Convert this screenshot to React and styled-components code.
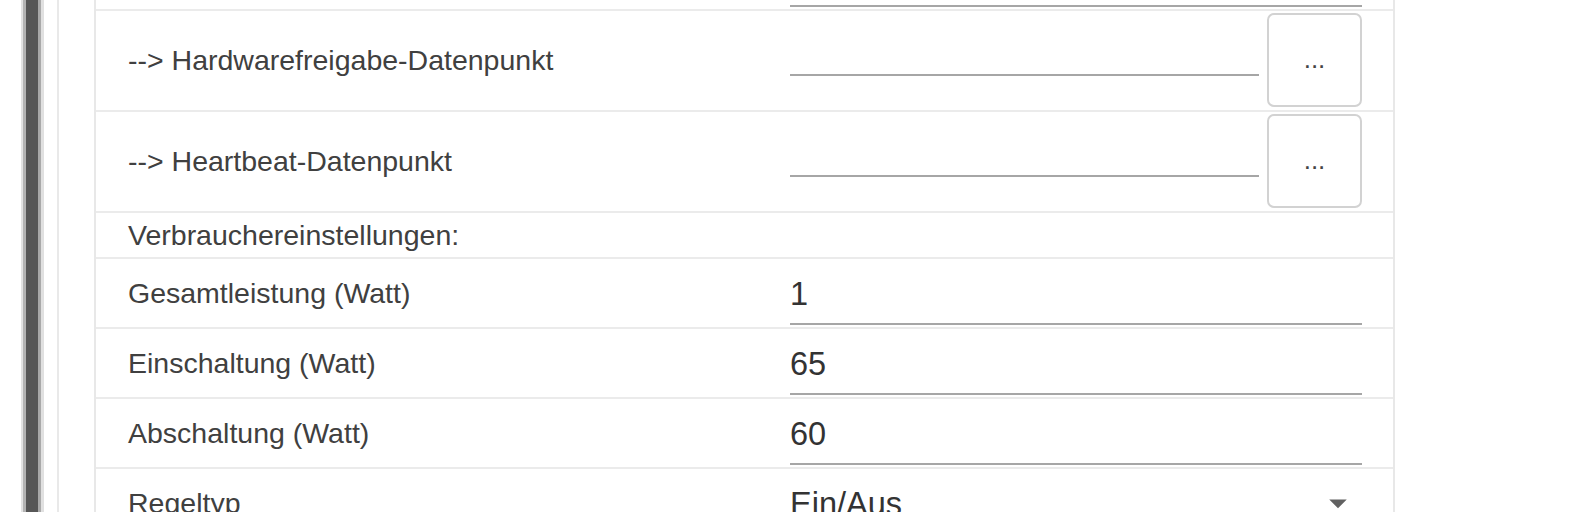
import React from "react";
import styled, { createGlobalStyle } from "styled-components";

const GlobalStyle = createGlobalStyle`
  html, body { margin: 0; padding: 0; background: #ffffff; }
  body { font-family: "Liberation Sans", Arial, sans-serif; overflow: hidden; }
`;

const Page = styled.div`
  display: flex;
  align-items: stretch;
  height: 512px;
  overflow: hidden;
  background: #fff;
`;

const Rail = styled.div`
  flex: none;
  width: 23px;
  margin-left: 21px;
  background: linear-gradient(
    to right,
    #e3e3e3 0, #e3e3e3 2px,
    #b3b3b3 2px, #b3b3b3 5px,
    #575757 5px, #575757 17px,
    #a9a9a9 17px, #a9a9a9 20px,
    #e0e0e0 20px, #e0e0e0 23px
  );
`;

const Divider = styled.div`
  flex: none;
  width: 2px;
  margin-left: 13px;
  background: #e9e9e9;
`;

const Main = styled.div`
  flex: 1;
  padding-left: 35px;
  display: flex;
  align-items: flex-start;
`;

const Table = styled.div`
  width: 1301px;
  flex: none;
  margin-top: -59px;
  border-left: 2px solid #e8e8e8;
  border-right: 2px solid #e8e8e8;
  box-sizing: border-box;
`;

const Row = styled.div`
  display: grid;
  grid-template-columns: 694px 1fr;
  height: ${(p) => p.$h}px;
  box-sizing: border-box;
  border-bottom: 2px solid #ebebeb;
`;

const Label = styled.div`
  display: flex;
  align-items: center;
  padding-left: 32px;
  font-size: 28.5px;
  color: #404040;
  white-space: nowrap;
`;

const ValueCell = styled.div`
  display: flex;
  align-items: ${(p) => (p.$center ? "center" : "flex-end")};
  gap: 8px;
  padding: ${(p) => (p.$center ? "2px 31px 3px 0" : "0 31px 2px 0")};
  box-sizing: border-box;
  min-width: 0;
`;

const TextInput = styled.input`
  flex: 1;
  min-width: 0;
  height: ${(p) => p.$h}px;
  box-sizing: border-box;
  margin: 0;
  padding: 0;
  border: none;
  border-bottom: 2px solid #a6a6a6;
  border-radius: 0;
  outline: none;
  background: transparent;
  font-family: "Liberation Sans", Arial, sans-serif;
  font-size: 32.5px;
  color: #333;
`;

const DotsButton = styled.button`
  flex: none;
  width: 95px;
  height: 94px;
  margin: 0;
  padding: 0 0 2px 0;
  box-sizing: border-box;
  border: 2px solid #d2d2d2;
  border-radius: 7px;
  background: #fff;
  font-family: "Liberation Sans", Arial, sans-serif;
  font-size: 26px;
  color: #444;
  line-height: 1;
  cursor: pointer;
`;

const Select = styled.div`
  flex: 1;
  display: flex;
  align-items: center;
  height: 60px;
  box-sizing: border-box;
  border-bottom: 2px solid #a6a6a6;
  font-size: 32.5px;
  color: #333;
`;

const SelectText = styled.span`
  flex: 1;
`;

const Caret = styled.svg`
  flex: none;
  width: 42px;
  height: 42px;
  margin: -2px 3px 0 0;
  fill: #616161;
`;

const rows = [
  { type: "input", label: "", value: "" },
  { type: "button", label: "--> Hardwarefreigabe-Datenpunkt", value: "" },
  { type: "button", label: "--> Heartbeat-Datenpunkt", value: "" },
  { type: "header", label: "Verbrauchereinstellungen:" },
  { type: "input", label: "Gesamtleistung (Watt)", value: "1" },
  { type: "input", label: "Einschaltung (Watt)", value: "65" },
  { type: "input", label: "Abschaltung (Watt)", value: "60" },
  { type: "select", label: "Regeltyp", value: "Ein/Aus" },
];

export default function App() {
  return (
    <>
      <GlobalStyle />
      <Page>
        <Rail />
        <Divider />
        <Main>
          <Table>
            {rows.map((r, i) => {
              if (r.type === "header") {
                return (
                  <Row key={i} $h={46}>
                    <Label>{r.label}</Label>
                    <div />
                  </Row>
                );
              }
              if (r.type === "button") {
                return (
                  <Row key={i} $h={101}>
                    <Label>{r.label}</Label>
                    <ValueCell $center>
                      <TextInput $h={32} defaultValue={r.value} />
                      <DotsButton>...</DotsButton>
                    </ValueCell>
                  </Row>
                );
              }
              if (r.type === "select") {
                return (
                  <Row key={i} $h={70}>
                    <Label>{r.label}</Label>
                    <ValueCell>
                      <Select>
                        <SelectText>{r.value}</SelectText>
                        <Caret viewBox="0 0 24 24">
                          <path d="M7 10l5 5 5-5z" />
                        </Caret>
                      </Select>
                    </ValueCell>
                  </Row>
                );
              }
              return (
                <Row key={i} $h={70}>
                  <Label>{r.label}</Label>
                  <ValueCell>
                    <TextInput $h={60} defaultValue={r.value} />
                  </ValueCell>
                </Row>
              );
            })}
          </Table>
        </Main>
      </Page>
    </>
  );
}
